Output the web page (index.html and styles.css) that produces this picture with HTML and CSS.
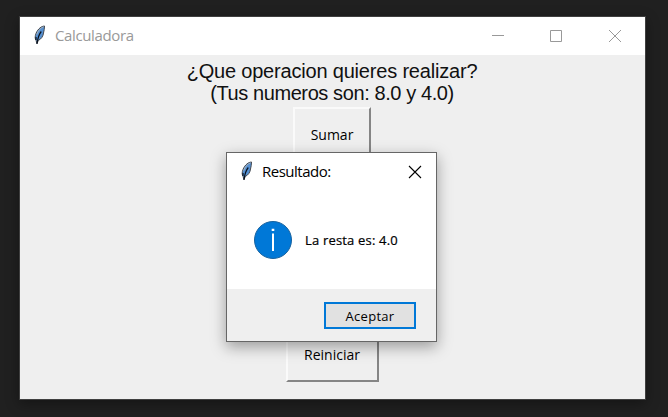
FILE: index.html
```html
<!DOCTYPE html>
<html lang="es">
<head>
<meta charset="utf-8">
<title>Calculadora</title>
<link rel="stylesheet" href="styles.css">
</head>
<body>
<svg width="0" height="0" class="defs" aria-hidden="true">
  <symbol id="feather" viewBox="0 0 14 20">
    <path d="M11.500 1C8.500 1.200 5 3.800 3.200 8C1.700 11.500 2 14 3.100 15.500L4 19L5.200 15.500C8.500 14 10.200 11 10.500 8C11 5.500 11.600 3.500 11.500 1Z" fill="#5590d2" stroke="#44484e" stroke-width="1"/>
    <path d="M10.500 1.800C7.500 3 4.800 6 3.700 9.500" fill="none" stroke="#a8b3bd" stroke-width="1"/>
    <path d="M8.300 6.500C6.500 8.500 5 12 4 18.500M3 12V15" fill="none" stroke="#08111e" stroke-width="1.200"/>
  </symbol>
</svg>
<main class="window">
  <header class="titlebar">
    <svg class="feather"><use href="#feather"/></svg>
    <span class="title">Calculadora</span>
    <div class="controls">
      <svg width="14" height="14" viewBox="0 0 14 14"><path d="M1 6.500H13"/></svg>
      <svg width="14" height="14" viewBox="0 0 14 14"><path d="M1.500 1.500H12.500V12.500H1.500Z"/></svg>
      <svg width="14" height="14" viewBox="0 0 14 14"><path d="M1 1L13 13M13 1L1 13"/></svg>
    </div>
  </header>
  <section class="content">
    <div class="question"><span class="line-one">¿Que operacion quieres realizar?</span><span class="line-two">(Tus numeros son: 8.0 y 4.0)</span></div>
    <button class="tk-button add"><span>Sumar</span></button>
    <button class="tk-button reset"><span>Reiniciar</span></button>
  </section>
</main>
<div class="dialog" role="dialog">
  <header class="dialog-bar">
    <svg class="feather"><use href="#feather"/></svg>
    <span class="dialog-title">Resultado:</span>
    <svg class="close" width="14" height="14" viewBox="0 0 14 14"><path d="M1 1L13 13M13 1L1 13"/></svg>
  </header>
  <div class="message">
    <svg width="38" height="38" viewBox="0 0 38 38"><circle cx="19" cy="19" r="18.500" fill="#0078d7" stroke="#17629f"/><path d="M18 12.500H20V30H18ZM17.700 7.800H20.300V10H17.700Z" fill="#fff"/></svg>
    <span class="result">La resta es: 4.0</span>
  </div>
  <footer class="actions"><button class="accept"><span>Aceptar</span></button></footer>
</div>
</body>
</html>
```
FILE: styles.css
```css
* { box-sizing: border-box; }
body {
  margin: 0;
  width: 668px;
  height: 417px;
  padding: 16px 0 0 19px;
  overflow: hidden;
  background: #202020;
  font-family: "Open Sans", "Noto Sans", sans-serif;
  color: #000;
}
.defs { position: absolute; }
.window {
  width: 627px;
  height: 384px;
  border: 1px solid #3f3f3f;
  background: #efefef;
  box-shadow: 0 4px 12px rgba(0, 0, 0, .35);
}
.titlebar {
  display: flex;
  align-items: center;
  height: 38px;
  padding: 0 23px 0 13px;
  background: #fff;
}
.feather { width: 14px; height: 20px; flex: none; margin-bottom: 2px; }
.title {
  margin: 0 0 2px 8px;
  color: #999;
  font-size: 15px;
  line-height: 20px;
  letter-spacing: -.37px;
}
.controls { display: flex; gap: 44px; margin-left: auto; }
.controls svg { fill: none; stroke: #999; stroke-width: 1; }
.controls svg:first-child { margin-right: 1px; }
.controls svg:nth-child(2) { margin-left: -1px; margin-right: 1px; }
.content { display: flex; flex-direction: column; align-items: center; padding: 5px 1px 0 0; }
.question {
  display: flex;
  flex-direction: column;
  align-items: center;
  height: 47px;
  font: 20px/22px "Liberation Sans", Arial, sans-serif;
  color: #111;
  white-space: nowrap;
}
.line-one { letter-spacing: -.19px; }
.line-two { letter-spacing: -.4px; }
.tk-button {
  height: 55px;
  padding: 0;
  border: 2px solid;
  border-color: #fafafa #858585 #858585 #fafafa;
  background: #efefef;
  color: #000;
  font: 14px/18px "Open Sans", "Noto Sans", sans-serif;
}
.add { width: 78px; }
.reset { width: 93px; margin-top: 165px; }
.dialog {
  position: absolute;
  left: 226px;
  top: 152px;
  width: 211px;
  height: 190px;
  border: 1px solid #666;
  background: #fff;
  box-shadow: 0 5px 14px rgba(0, 0, 0, .35);
}
.dialog-bar { display: flex; align-items: center; height: 38px; padding: 0 14px 0 13px; }
.dialog-title { margin: 0 0 2px 8px; font-size: 15px; line-height: 20px; letter-spacing: -.5px; }
.close { margin-left: auto; fill: none; stroke: #000; stroke-width: 1.100; }
.message { display: flex; align-items: center; height: 98px; padding: 0 0 0 27px; }
.result { margin-left: 13px; font-size: 13px; letter-spacing: .18px; white-space: nowrap; -webkit-text-stroke: .2px #000; }
.actions { display: flex; justify-content: flex-end; height: 52px; padding: 13px 20px 0 0; background: #efefef; }
.accept {
  width: 92px;
  height: 27px;
  padding: 0;
  border: 2px solid #0078d7;
  background: #e1e1e1;
  color: #000;
  font: 13px/18px "Open Sans", "Noto Sans", sans-serif;
  letter-spacing: .3px;
}
```
